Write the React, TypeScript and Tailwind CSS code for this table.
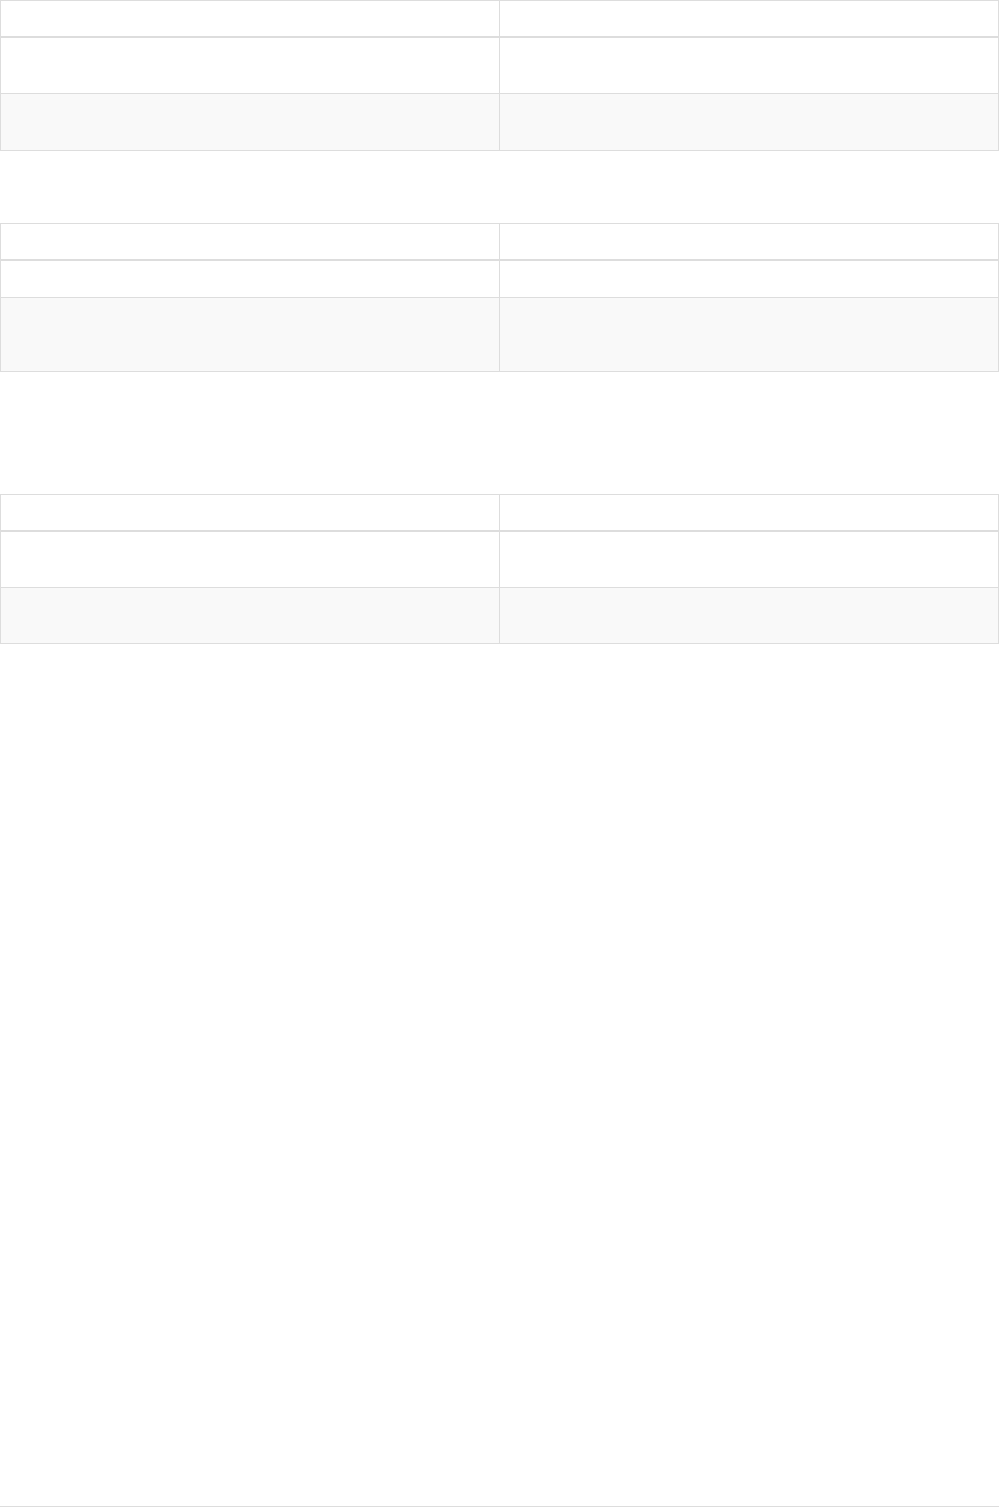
const tables = [
  { gap: "mt-0", rows: ["h-[56px]", "h-[56px]"] },
  { gap: "mt-[72px]", rows: ["h-[37px]", "h-[73px]"] },
  { gap: "mt-[122px]", rows: ["h-[56px]", "h-[55px]"] },
];

const Cell = ({ first }: { first?: boolean }) => (
  <div className={first ? "border-r border-[#dddddd]" : ""}></div>
);

const EmptyTable = ({ gap, rows }: { gap: string; rows: string[] }) => (
  <div className={`${gap} border border-[#dddddd] bg-white`}>
    <div className="grid grid-cols-[499px_1fr] h-[37px] border-b-2 border-[#dddddd]">
      <Cell first />
      <Cell />
    </div>
    <div className={`grid grid-cols-[499px_1fr] ${rows[0]} border-b border-[#dddddd]`}>
      <Cell first />
      <Cell />
    </div>
    <div className={`grid grid-cols-[499px_1fr] ${rows[1]} bg-[#f9f9f9]`}>
      <Cell first />
      <Cell />
    </div>
  </div>
);

export default function App() {
  return (
    <div className="w-[999px] h-[1507px] bg-white border-b border-[#dddddd] font-['Liberation_Sans',Arial,sans-serif] text-sm text-[#333333]">
      {tables.map((t, i) => (
        <EmptyTable key={i} gap={t.gap} rows={t.rows} />
      ))}
    </div>
  );
}
